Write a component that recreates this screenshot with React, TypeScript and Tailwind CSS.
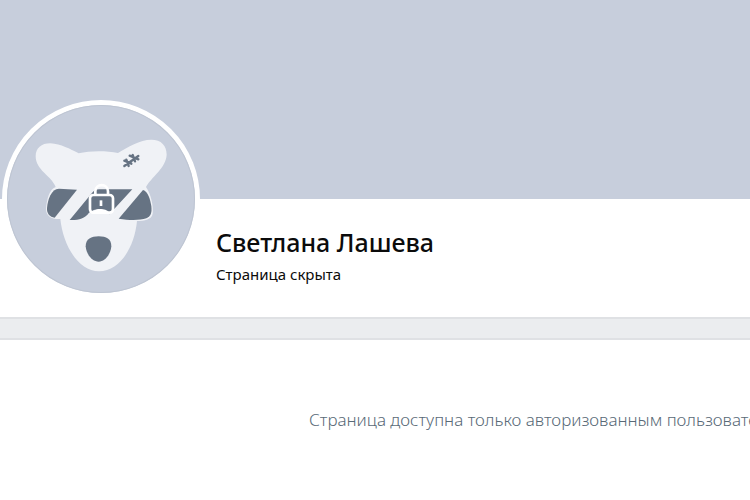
import { ReactNode } from "react"

const DogAvatar = () => {
  return (
    <svg viewBox="22 46 564 564" className="block w-full" role="img" aria-label="Фото профиля">
      {/* head */}
      <path
        fill="#f0f2f6"
        d="M108 200C108 175 125 161 152 161C185 163 210 178 237 191C270 183 320 183 355 190C385 172 420 150 455 150C485 150 501 168 501 195C499 235 455 262 439 292C452 310 462 345 459 372C456 390 435 393 412 394C405 470 362 545 298 545C235 545 190 465 182 388C160 390 139 382 139 358C141 330 149 298 168 292C155 258 108 242 108 200Z"
      />
      {/* glasses and nose */}
      <g fill="#667383">
        <path d="M178 297L232 300L165 384C150 382 141 372 142 355C144 330 155 297 178 297Z" />
        <path d="M210 391L280 306Q286 299 298 299L398 299L329 374Q300 345 268 369C255 388 235 392 210 391Z" />
        <path d="M430 301C445 305 452 330 455 350C457 365 455 380 440 386C420 392 390 392 357 387Z" />
        <path d="M258 470C258 448 275 440 297 440C320 440 335 448 335 470C333 495 315 516 297 516C278 516 260 495 258 470Z" />
      </g>
      {/* stitches */}
      <path
        fill="none"
        stroke="#667383"
        strokeWidth="7"
        strokeLinecap="round"
        d="M374 229L416 199M374 213L395 222M390 198L416 209M380 210L387 229M399 196L406 215"
      />
      {/* lock */}
      <path fill="#fff" d="M280 368C288 355 317 355 328 368Z" />
      <g fill="none" stroke="#fff" strokeWidth="8">
        <rect x="271" y="316" width="69" height="53" rx="10" />
        <path d="M287 315V305C287 280 325 280 325 305V315" />
        <path d="M304 332V349" />
      </g>
    </svg>
  )
}

const Block = ({ children }: { children: ReactNode }) => {
  return <section className="bg-white">{children}</section>
}

const App = () => {
  return (
    <main className="min-h-screen overflow-hidden bg-white font-['Noto_Sans','Open_Sans',sans-serif]">
      <Block>
        <div className="h-[199px] bg-[#c7cedc]" />
        <div className="flex h-[118px] items-end gap-4 pb-5 pl-0.5">
          <div className="-mb-px w-[198px] shrink-0 rounded-full border-5 border-white bg-[#c7cedc]">
            <div className="rounded-full shadow-[inset_0_0_0_1px_#bec5d2]">
              <DogAvatar />
            </div>
          </div>
          <div className="pb-[11px]">
            <h1 className="text-[25px] leading-8 font-medium text-[#0b0b0b]">Светлана Лашева</h1>
            <p className="mt-1 text-[15px] leading-6 text-[#0b0b0b]">Страница скрыта</p>
          </div>
        </div>
      </Block>
      <div className="h-[23px] border-y-2 border-[#dfe1e4] bg-[#ebedef]" />
      <Block>
        <p className="pt-[68px] pl-[309px] text-[17px] leading-6 font-light whitespace-nowrap text-[#596a77]">
          Страница доступна только авторизованным пользователям.
        </p>
      </Block>
    </main>
  )
}

export default App
